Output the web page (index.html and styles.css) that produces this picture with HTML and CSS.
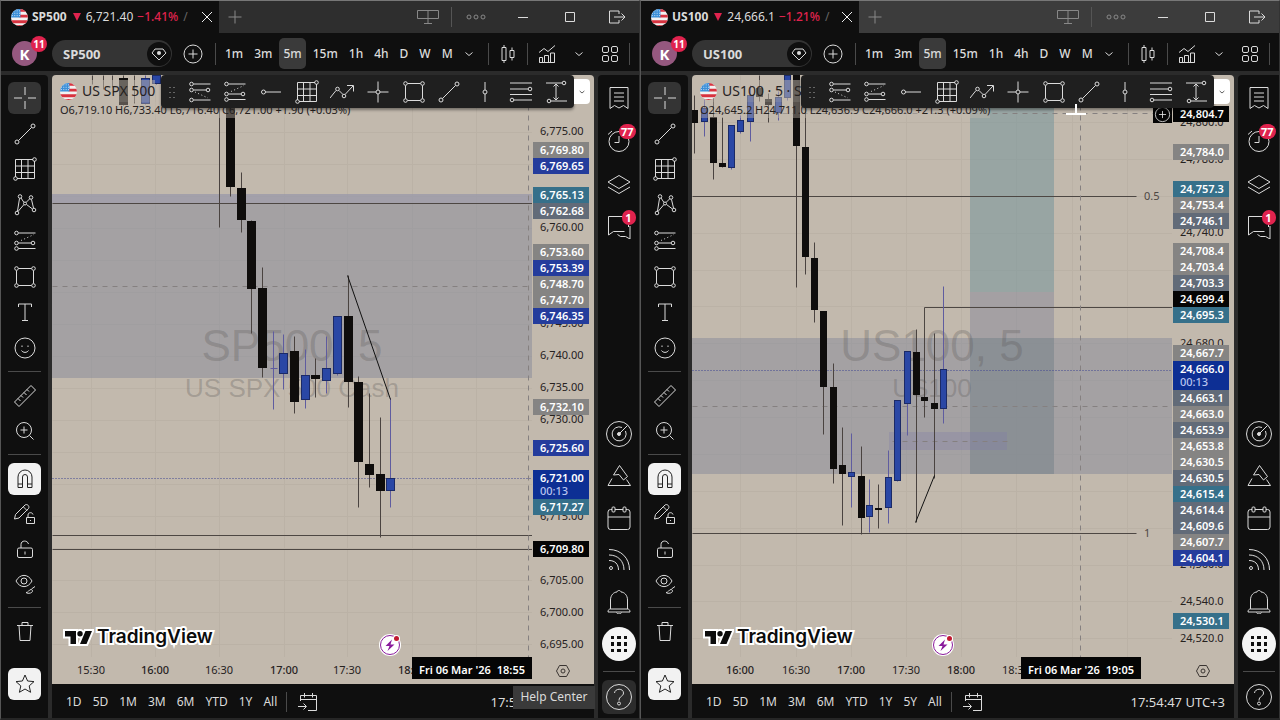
FILE: index.html
```
<!DOCTYPE html>
<html lang="en">
<head>
    <meta charset="UTF-8">
    <meta name="viewport" content="width=device-width, initial-scale=1">
    <title>SP500 / US100</title>
    <link rel="stylesheet" href="styles.css">
</head>
<body>
    <!-- icon sprite, every icon is on a 24x24 box -->
    <svg class="sprite" xmlns="http://www.w3.org/2000/svg">
        <defs>
            <clipPath id="flagClip"><circle cx="9" cy="9" r="9"/></clipPath>
        </defs>
        <symbol id="flag" viewBox="0 0 18 18">
            <g clip-path="url(#flagClip)" stroke="none">
                <path fill="#f2f2f2" d="M0 0h18v18H0z"/>
                <path fill="#d8323f" d="M9 0h9v3H9zM9 6h9v3H9zM0 12h18v3H0zM0 17h18v1H0z"/>
                <path fill="#3b8fd8" d="M0 0h10v9H0z"/>
                <path stroke="#d5e8f8" stroke-width="1" stroke-dasharray="1 1.5" d="M1 2h9M1 4.500h9M1 7h9"/>
            </g>
        </symbol>
        <symbol id="close" viewBox="0 0 24 24"><path d="M7 7l10 10M17 7L7 17"/></symbol>
        <symbol id="plus" viewBox="0 0 24 24"><path d="M12 5.500v13M5.500 12h13"/></symbol>
        <symbol id="screens" viewBox="0 0 24 24"><path d="M1.500 5.500h21v8h-21zM12 5.500v13M8 18.500h8"/></symbol>
        <symbol id="dots" viewBox="0 0 24 24"><circle cx="5" cy="12" r="2"/><circle cx="12" cy="12" r="2"/><circle cx="19" cy="12" r="2"/></symbol>
        <symbol id="minimize" viewBox="0 0 24 24"><path d="M7 12.500h10"/></symbol>
        <symbol id="maximize" viewBox="0 0 24 24"><path d="M7.500 7.500h9v9h-9z"/></symbol>
        <symbol id="exit" viewBox="0 0 24 24"><path d="M14 9V6H4.500v12H14v-3M9 12h11M16.500 8.500L20 12l-3.500 3.500"/></symbol>
        <symbol id="gem" viewBox="0 0 24 24"><circle cx="12" cy="12" r="12" fill="#0f0f0f" stroke="none"/><path d="M8 7h8l3 4-7 7-7-7z"/><circle cx="12" cy="11" r="2" fill="currentColor" stroke="none"/></symbol>
        <symbol id="plusCircle" viewBox="0 0 24 24"><circle cx="12" cy="12" r="9"/><path d="M12 7.500v9M7.500 12h9"/></symbol>
        <symbol id="chevron" viewBox="0 0 24 24"><path d="M8.500 10.500l3.500 3 3.500-3"/></symbol>
        <symbol id="candles" viewBox="0 0 24 24"><path d="M6 5.500h4v13H6zM8 3v2.500M8 18.500V21M14 8.500h4v7h-4zM16 5.500v3M16 15.500v3"/></symbol>
        <symbol id="indicators" viewBox="0 0 24 24"><path d="M4.500 20.500v-5h3v5zM9.500 20.500v-7h4v7zM15.500 20.500V11h4v9.500zM4.500 20.500h15M4 10.500l5-4 4 3 7-6"/></symbol>
        <symbol id="tiles" viewBox="0 0 24 24"><rect x="4.500" y="4.500" width="6" height="6" rx="1.500"/><rect x="13.500" y="4.500" width="6" height="6" rx="1.500"/><rect x="4.500" y="13.500" width="6" height="6" rx="1.500"/><rect x="13.500" y="13.500" width="6" height="6" rx="1.500"/></symbol>

        <symbol id="crosshair" viewBox="0 0 24 24"><path d="M12 1v8M12 15v8M1 12h8M15 12h8"/></symbol>
        <symbol id="trendLine" viewBox="0 0 24 24"><circle cx="4" cy="20" r="2"/><circle cx="20" cy="4" r="2"/><path d="M5.500 18.500l13-13"/></symbol>
        <symbol id="gannBox" viewBox="0 0 24 24"><path d="M20 2.500H2.500V20M4 21.500h17.500V4M8.500 2.500v19M15 2.500v19M2.500 9h19M2.500 15.500h19"/><circle cx="21.500" cy="2.500" r="1.800"/><circle cx="2.500" cy="21.500" r="1.800"/></symbol>
        <symbol id="pattern" viewBox="0 0 24 24"><circle cx="7" cy="3.500" r="1.800"/><circle cx="18" cy="4.500" r="1.800"/><circle cx="4" cy="20" r="1.800"/><circle cx="21" cy="17" r="1.800"/><circle cx="12" cy="10.500" r="1.500"/><path d="M6.500 5.500L4.500 18M5 18.500l6-7M13 9.500l4-4M18.500 6.500l2 8.500M8 5l3 4.500M13.500 11.500l6 4.500"/></symbol>
        <symbol id="fibUp" viewBox="0 0 24 24"><circle cx="3.500" cy="4" r="1.800"/><circle cx="3.500" cy="14" r="1.800"/><circle cx="20" cy="14" r="1.800"/><circle cx="3.500" cy="19.500" r="1.800"/><path d="M5.500 4h17M5.500 14h12.500M5.500 19.500h17"/><path stroke-dasharray="1 2.500" d="M8 11.500l13-6"/></symbol>
        <symbol id="fibDown" viewBox="0 0 24 24"><circle cx="3.500" cy="4" r="1.800"/><circle cx="3.500" cy="10" r="1.800"/><circle cx="20" cy="10" r="1.800"/><circle cx="3.500" cy="20" r="1.800"/><path d="M5.500 4h17M5.500 10h12.500M5.500 20h17"/><path stroke-dasharray="1 2.500" d="M7 12l13 6"/></symbol>
        <symbol id="hRay" viewBox="0 0 24 24"><circle cx="4.500" cy="12" r="2"/><path d="M6.500 12H22"/></symbol>
        <symbol id="wave" viewBox="0 0 24 24"><circle cx="7.500" cy="9" r="1.800"/><circle cx="14" cy="16" r="1.800"/><path d="M0 18l6-7.500M9 10.500l4 4M15 14.500L23 6M17 5.500h6.500v6"/></symbol>
        <symbol id="crossLine" viewBox="0 0 24 24"><circle cx="12" cy="12" r="2"/><path d="M12 1.500V10M12 14v8.500M1.500 12H10M14 12h8.500"/></symbol>
        <symbol id="rectangle" viewBox="0 0 24 24"><circle cx="3.500" cy="3.500" r="1.800"/><circle cx="20.500" cy="3.500" r="1.800"/><circle cx="3.500" cy="20.500" r="1.800"/><circle cx="20.500" cy="20.500" r="1.800"/><path d="M5.500 3.500h13M5.500 20.500h13M3.500 5.500v13M20.500 5.500v13"/></symbol>
        <symbol id="vLine" viewBox="0 0 24 24"><circle cx="12" cy="12" r="2"/><path d="M12 2v8M12 14v8"/></symbol>
        <symbol id="channel" viewBox="0 0 24 24"><circle cx="21" cy="9" r="1.800"/><circle cx="3" cy="20" r="1.800"/><path d="M1 3h22M1 9h18M1 14.500h22M5 20h18"/></symbol>
        <symbol id="priceRange" viewBox="0 0 24 24"><circle cx="20" cy="3" r="1.800"/><circle cx="5" cy="21" r="1.800"/><path d="M2 3h16M7 21h16M12 4v16M9.500 6.500L12 4l2.500 2.500M9.500 17.500L12 20l2.500-2.500"/></symbol>
        <symbol id="text" viewBox="0 0 24 24"><path d="M5.500 7V4h13v3M12 4v16M9 20.500h6"/></symbol>
        <symbol id="smile" viewBox="0 0 24 24"><circle cx="12" cy="12" r="10"/><path d="M8.500 14.500c1.500 2.500 5.500 2.500 7 0M9 9.500v1.500M15 9.500v1.500"/></symbol>
        <symbol id="ruler" viewBox="0 0 24 24"><path d="M1.500 18L18 1.500 22.500 6 6 22.500zM5 14.500l2.500 2.500M8 11.500l2 2M11 8.500l2.500 2.500M14 5.500l2 2"/></symbol>
        <symbol id="zoomIn" viewBox="0 0 24 24"><circle cx="11" cy="11" r="7.500"/><path d="M16.500 16.500l4 4M11 7.500v7M7.500 11h7"/></symbol>
        <symbol id="magnet" viewBox="0 0 24 24"><path d="M5 20.500V10a7 7 0 0 1 14 0v10.500h-4.500V10a2.500 2.500 0 0 0-5 0v10.500zM5 17h4.500M14.500 17H19"/></symbol>
        <symbol id="pencilLock" viewBox="0 0 24 24"><path d="M2.500 12.500L12 3c2-1.500 5 1 3.500 3.500L6 16l-4.500 1zM10.500 5l3.500 3.500M13.500 15.500h8v6h-8zM15 15.500V13c0-3 4.500-3 5-.5M17.500 18v1"/></symbol>
        <symbol id="unlock" viewBox="0 0 24 24"><rect x="4.500" y="11" width="15" height="9.500" rx="1.500"/><path d="M8 11V7.500c0-4.500 6.500-4.500 7.500-.5M12 14.500v3"/></symbol>
        <symbol id="eye" viewBox="0 0 24 24"><path d="M3 9c4-7.500 12-7.500 16 0-4 7.500-12 7.500-16 0z"/><circle cx="11" cy="9" r="3"/><path d="M13 20.500c2 .5 3-3 5-3s2 3-.5 3.500-3 .5-4.500-.5zM18.500 17l3.500-2.500"/></symbol>
        <symbol id="trash" viewBox="0 0 24 24"><path d="M4 5.500h16M6 5.500l1 15h10l1-15M9 5.500v-3h6v3"/></symbol>
        <symbol id="star" viewBox="0 0 24 24"><path d="M12 3l2.600 6 6.400.6-4.800 4.300 1.400 6.400L12 17l-5.600 3.300 1.400-6.400L3 9.600 9.400 9z"/></symbol>

        <symbol id="watchlist" viewBox="0 0 24 24"><path d="M3 1.500h18v21l-4.500-3-4.500 2.500-4.500-2.500-4.500 3zM7 7h10M7 11h10M7 15h10"/></symbol>
        <symbol id="alarm" viewBox="0 0 24 24"><circle cx="12" cy="12.500" r="10"/><path d="M12 7v6.500H7.500M1 5.500L5 2M19 2l4 3.500"/></symbol>
        <symbol id="layers" viewBox="0 0 24 24"><path d="M12 3.500l11 6.500-11 6.500L1 10zM1 15l11 6.500L23 15"/></symbol>
        <symbol id="chat" viewBox="0 0 24 24"><path d="M17.500 16.500H6.500L1.500 20V1.500h20V12M10.500 19.500l3 2h5l4.500 2.500V11"/></symbol>
        <symbol id="radar" viewBox="0 0 26 26"><circle cx="13" cy="13" r="12.500"/><path d="M19.500 10a7 7 0 1 1-3.500-3.500M13 13l8.500-8.500"/><circle cx="13" cy="13" r="1.500" fill="currentColor"/></symbol>
        <symbol id="mountain" viewBox="0 0 24 24"><path d="M6.500 11l6-9.500 8 11-4 3.500-4.500-5.500zM5 14.500L1 21.500h22.500L19.500 15.500"/></symbol>
        <symbol id="calendar" viewBox="0 0 24 24"><rect x="1" y="3.500" width="22" height="20" rx="2.500"/><path d="M1 11h22"/><rect x="5" y="1" width="3" height="5" rx="1" fill="#0f0f0f"/><rect x="16" y="1" width="3" height="5" rx="1" fill="#0f0f0f"/></symbol>
        <symbol id="feed" viewBox="0 0 24 24"><circle cx="4" cy="20" r="1.500"/><path d="M2 1.500C14 1.500 22.500 10 22.500 22M2 7c9 0 15 6 15 15M2 12.500c6 0 9.500 3.500 9.500 9.500"/></symbol>
        <symbol id="bell" viewBox="0 0 24 24"><path d="M3.500 19v-9C3.500 5 7 2 10 2c.5-2 3.500-2 4 0 3 0 6.500 3 6.500 8v9M1 22c0-2 1-3 2.500-3h17c1.500 0 2.500 1 2.500 3zM9.500 22.500c.5 2 4.500 2 5 0"/></symbol>
        <symbol id="apps" viewBox="0 0 24 24"><path fill="currentColor" stroke="none" d="M4 4h3v3H4zM10 4h4v3h-4zM17 4h3v3h-3zM4 10h3v4H4zM10 10h4v4h-4zM17 10h3v4h-3zM4 17h3v3H4zM10 17h4v3h-4zM17 17h3v3h-3z"/></symbol>
        <symbol id="help" viewBox="0 0 26 26"><circle cx="13" cy="13" r="12.500"/><path d="M8.500 9c.5-5 9-5 9 0 0 3.500-4.500 3-4.500 7.500"/><circle cx="13" cy="19.500" r="1.500"/></symbol>
        <symbol id="goTo" viewBox="0 0 24 24"><path d="M4.500 11V5.500h16v15H12M4.500 9.500h16M8.500 3v4.500M16.500 3v4.500M2 16.500h8M7.500 13.500l3 3-3 3"/></symbol>
        <symbol id="hexagon" viewBox="0 0 24 24"><path d="M8.500 6.500h7l3 5.500-3 5.500h-7l-3-5.500z"/><circle cx="12" cy="12" r="2"/></symbol>
        <symbol id="event" viewBox="0 0 24 24"><circle cx="12" cy="12" r="11" fill="#fff" stroke="none"/><circle cx="12" cy="12" r="9.500" fill="#fff" stroke="#8a1a9c"/><path fill="#8a1a9c" stroke="none" d="M14 6.500L7.500 13h4L9.500 18l7-6.500h-4z"/><circle cx="18.500" cy="5.500" r="3.500" fill="#fff" stroke="none"/><circle cx="18.500" cy="5.500" r="2.500" fill="#c01830" stroke="none"/></symbol>
        <symbol id="tvMark" viewBox="0 0 32 20"><path fill="#0c0c0c" stroke="#fff" stroke-width="4" paint-order="stroke" d="M3 4h11v13H8.500V9.500H3zM18 4a2.700 2.700 0 1 1 0 5.400A2.700 2.700 0 0 1 18 4zM23.500 4H30l-5.500 13H18z"/></symbol>
    </svg>

    <main class="desk" id="desk"></main>

    <template id="windowTemplate">
        <section class="window">
            <header class="titlebar">
                <div class="tab">
                    <svg class="flag"><use href="#flag"/></svg>
                    <b data-text="symbol"></b>
                    <i class="arrow-down"></i>
                    <span class="last" data-text="last"></span>
                    <span class="change" data-text="change"></span>
                    <span class="faded">/</span>
                    <button class="tab-close" aria-label="Close tab"><svg class="icon"><use href="#close"/></svg></button>
                </div>
                <button class="new-tab" aria-label="New tab"><svg class="icon"><use href="#plus"/></svg></button>
                <div class="window-buttons">
                    <button class="dim" aria-label="Layouts"><svg class="icon"><use href="#screens"/></svg></button>
                    <span class="v-sep"></span>
                    <button class="dim" aria-label="More"><svg class="icon"><use href="#dots"/></svg></button>
                    <button aria-label="Minimize"><svg class="icon"><use href="#minimize"/></svg></button>
                    <button aria-label="Maximize"><svg class="icon"><use href="#maximize"/></svg></button>
                    <button aria-label="Exit"><svg class="icon"><use href="#exit"/></svg></button>
                </div>
            </header>

            <nav class="topbar">
                <button class="avatar" aria-label="Profile">K<span class="badge">11</span></button>
                <button class="search"><span data-text="symbol"></span><svg class="icon"><use href="#gem"/></svg></button>
                <button class="compare" aria-label="Compare"><svg class="icon"><use href="#plusCircle"/></svg></button>
                <span class="v-sep"></span>
                <div class="intervals">
                    <button>1m</button>
                    <button>3m</button>
                    <button class="active">5m</button>
                    <button>15m</button>
                    <button>1h</button>
                    <button>4h</button>
                    <button>D</button>
                    <button>W</button>
                    <button>M</button>
                </div>
                <div class="chart-buttons">
                    <button aria-label="More intervals"><svg class="icon"><use href="#chevron"/></svg></button>
                    <span class="v-sep"></span>
                    <button aria-label="Candles"><svg class="icon"><use href="#candles"/></svg></button>
                    <span class="v-sep"></span>
                    <button aria-label="Indicators"><svg class="icon"><use href="#indicators"/></svg></button>
                    <button aria-label="Favourites"><svg class="icon"><use href="#chevron"/></svg></button>
                    <button aria-label="Templates"><svg class="icon"><use href="#tiles"/></svg></button>
                    <span class="v-sep"></span>
                </div>
            </nav>

            <div class="workspace">
                <aside class="tools">
                    <div class="tool-group drawing" data-icons="crosshair trendLine gannBox pattern fibUp rectangle text smile"></div>
                    <div class="tool-group" data-icons="ruler zoomIn"></div>
                    <div class="tool-group locks" data-icons="magnet pencilLock unlock eye"></div>
                    <div class="tool-group" data-icons="trash"></div>
                    <div class="favourite" data-icons="star"></div>
                </aside>

                <div class="center">
                    <div class="chart">
                        <svg class="plot"></svg>
                        <svg class="price-axis"></svg>
                        <svg class="time-axis"></svg>
                        <div class="legend">
                            <div class="legend-title"><svg class="flag"><use href="#flag"/></svg><span data-text="title"></span></div>
                            <div class="ohlc" data-text="ohlc"></div>
                        </div>
                        <div class="floating">
                            <div class="floating-tools">
                                <span class="grip"></span>
                                <div class="floating-icons" data-icons="fibDown fibUp hRay gannBox wave crossLine rectangle trendLine vLine channel priceRange"></div>
                            </div>
                            <button class="caret" aria-label="Currency"><svg class="icon"><use href="#chevron"/></svg></button>
                        </div>
                        <svg class="cursor"><path d="M12 2v10M2 12h20"/></svg>
                        <div class="brand">
                            <svg class="brand-mark"><use href="#tvMark"/></svg>
                            <span>TradingView</span>
                        </div>
                    </div>
                    <footer class="ranges">
                        <div class="range-buttons"></div>
                        <span class="v-sep"></span>
                        <button aria-label="Go to date"><svg class="icon"><use href="#goTo"/></svg></button>
                        <span class="clock">17:54:47 UTC+3</span>
                    </footer>
                </div>

                <aside class="widgets">
                    <div class="widget-group">
                        <button aria-label="Watchlist"><svg class="icon"><use href="#watchlist"/></svg></button>
                        <button aria-label="Alerts"><svg class="icon"><use href="#alarm"/></svg><span class="badge">77</span></button>
                        <button aria-label="Object tree"><svg class="icon"><use href="#layers"/></svg></button>
                        <button aria-label="Chats"><svg class="icon"><use href="#chat"/></svg><span class="badge">1</span></button>
                    </div>
                    <div class="widget-group lower">
                        <button aria-label="Screeners"><svg class="icon big"><use href="#radar"/></svg></button>
                        <button aria-label="Pine"><svg class="icon"><use href="#mountain"/></svg></button>
                        <button aria-label="Calendar"><svg class="icon"><use href="#calendar"/></svg></button>
                        <button aria-label="News"><svg class="icon"><use href="#feed"/></svg></button>
                        <button aria-label="Notifications"><svg class="icon"><use href="#bell"/></svg></button>
                        <button class="apps" aria-label="Products"><svg class="icon"><use href="#apps"/></svg></button>
                    </div>
                    <span class="h-sep"></span>
                    <button class="help" aria-label="Help Center"><svg class="icon big"><use href="#help"/></svg><span class="tip">Help Center</span></button>
                </aside>
            </div>
        </section>
    </template>
    <script src="app.js"></script>
</body>
</html>
```
FILE: styles.css
```
* {
    box-sizing: border-box;
}
body {
    margin: 0;
    background: #0f0f0f;
    color: #dbdbdb;
    font: 12px/16px "Noto Sans", "Open Sans", sans-serif;
}
button {
    display: flex;
    align-items: center;
    justify-content: center;
    padding: 0;
    border: 0;
    background: none;
    color: inherit;
    font: inherit;
    cursor: pointer;
}
.sprite {
    position: absolute;
    width: 0;
    height: 0;
}
.icon {
    display: block;
    flex: none;
    width: 24px;
    height: 24px;
    fill: none;
    stroke: currentColor;
}
.icon.big {
    width: 26px;
    height: 26px;
}
.flag {
    flex: none;
    width: 17px;
    height: 17px;
}
.v-sep {
    flex: none;
    width: 1px;
    height: 20px;
    background: #4a4a4a;
}
.h-sep {
    flex: none;
    width: 32px;
    height: 1px;
    background: #4a4a4a;
}
.badge {
    position: absolute;
    display: flex;
    align-items: center;
    justify-content: center;
    min-width: 14px;
    height: 14px;
    padding: 0 2px;
    border-radius: 8px;
    background: #e0234e;
    color: #fff;
    font-size: 10px;
    font-weight: 700;
}

/* windows side by side */
.desk {
    display: flex;
    min-height: 100vh;
}
.window {
    display: flex;
    flex: 1;
    flex-direction: column;
    min-width: 0;
    border: 1px solid #555;
    border-top-color: #777;
    border-right-color: #333;
    border-bottom: 2px solid #262626;
}

/* title bar */
.titlebar {
    display: flex;
    height: 32px;
    background: #2e2e2e;
}
.window.focused .titlebar {
    background: #3c3c3c;
}
.tab {
    display: flex;
    align-items: center;
    width: 218px;
    padding-left: 10px;
    background: #0f0f0f;
}
.tab b {
    margin-left: 4px;
}
.arrow-down {
    margin: 0 5px 0 6px;
    border: 4px solid transparent;
    border-top: 8px solid #e0234e;
    border-bottom: 0;
}
.change {
    margin-left: 4px;
    color: #e0234e;
    font-weight: 500;
}
.faded {
    flex: 1;
    margin-left: 5px;
    color: #666;
}
.tab-close {
    width: 24px;
    color: #eee;
}
.new-tab {
    width: 32px;
    color: #888;
}
.window-buttons {
    display: flex;
    align-items: center;
    margin-left: auto;
    padding-right: 10px;
}
.window-buttons button {
    width: 24px;
    margin-left: 23px;
}
.window-buttons .v-sep {
    margin-left: 11px;
    background: #555;
}
.window-buttons .v-sep + button {
    margin-left: 12px;
}
.window-buttons .dim {
    color: #888;
}

/* symbol and intervals */
.topbar {
    display: flex;
    align-items: center;
    height: 38px;
    padding: 3px 0 0 11px;
}
.topbar .v-sep {
    height: 22px;
}
.avatar {
    position: relative;
    width: 25px;
    height: 25px;
    border-radius: 50%;
    background: #95587f;
    color: #fff;
    font-size: 15px;
    font-weight: 700;
}
.avatar .badge {
    top: -5px;
    right: -10px;
    width: 16px;
    height: 16px;
    border-radius: 50%;
}
.search {
    justify-content: space-between;
    width: 120px;
    height: 27px;
    margin-left: 15px;
    padding: 0 1px 0 11px;
    border-radius: 14px;
    background: #343434;
    font-size: 13px;
    font-weight: 700;
}
.compare {
    width: 24px;
    margin: 0 10px 0 9px;
}
.intervals {
    display: flex;
    gap: 3px;
    margin-left: 5px;
}
.intervals button {
    height: 31px;
    padding: 0 4px;
    border-radius: 5px;
    font-weight: 500;
}
.intervals .active {
    background: #3a3a3a;
}
.chart-buttons {
    display: flex;
    flex: 1;
    align-items: center;
    justify-content: space-between;
    margin-right: 9px;
}

/* body of a window */
.workspace {
    display: flex;
    flex: 1;
    gap: 4px;
    padding-top: 4px;
    background: #2b2b2b;
}
.tools {
    display: flex;
    flex-direction: column;
    width: 47px;
    padding: 7px 7px 18px;
    border-top-right-radius: 4px;
    background: #0f0f0f;
}
.tool-group {
    display: flex;
    flex-direction: column;
    justify-content: space-between;
    gap: 3px;
}
.tool-group + .tool-group {
    margin-top: 7px;
    padding-top: 8px;
    border-top: 1px solid #4a4a4a;
}
.tools button {
    width: 100%;
    height: 32px;
    border-radius: 6px;
}
.drawing {
    height: 282px;
}
.drawing button:first-child {
    background: #343434;
}
.locks button:first-child,
.favourite button {
    background: #f2f2f2;
    color: #222;
}
.favourite {
    margin-top: auto;
}
.widgets {
    display: flex;
    flex-direction: column;
    align-items: center;
    width: 41px;
    padding: 6px 0 4px;
    border-top-left-radius: 4px;
    background: #0f0f0f;
}
.widgets button {
    position: relative;
    flex: none;
    width: 34px;
    height: 34px;
}
.widgets .badge {
    top: 0;
    right: 0;
    height: 15px;
    font-size: 11px;
}
.widget-group {
    display: flex;
    flex-direction: column;
    gap: 9px;
}
.widget-group.lower {
    gap: 8px;
    margin-top: auto;
    margin-bottom: 10px;
}
.widgets .h-sep {
    margin-bottom: 8px;
}
.widgets .apps {
    border-radius: 50%;
    background: #f5f5f5;
    color: #111;
}
.widgets .help {
    border-radius: 6px;
}
.help-open .help {
    background: #2c2c2c;
}
.tip {
    position: absolute;
    right: 41px;
    display: none;
    height: 23px;
    padding: 3px 7px;
    background: #3a3a3a;
    white-space: nowrap;
}
.help-open .tip {
    display: block;
}

/* chart */
.center {
    display: flex;
    flex: 1;
    flex-direction: column;
    min-width: 0;
}
.chart {
    position: relative;
    display: grid;
    flex: 1;
    grid-template-columns: 1fr 62px;
    grid-template-rows: 1fr 27px;
    overflow: hidden;
    border-radius: 4px 4px 0 0;
    background: #c2b9ad;
    color: #26221f;
}
.plot,
.price-axis,
.time-axis {
    width: 100%;
    height: 100%;
    font-size: 11px;
}
.time-axis {
    grid-column: 1 / 3;
}
.grid-line {
    stroke: #bbb2a6;
}
.zone {
    fill: #85899a;
    fill-opacity: .5;
}
.zone-light {
    fill: #a39fb5;
    fill-opacity: .4;
}
.zone-violet {
    fill: #7d7ba8;
    fill-opacity: .3;
}
.target {
    fill: #77959a;
    fill-opacity: .55;
}
.stop {
    fill: #85879a;
    fill-opacity: .5;
}
.stop-deep {
    fill: #7c868c;
    fill-opacity: .6;
}
.watermark {
    fill: #5a5757;
    fill-opacity: .3;
    font-family: "Liberation Sans", Arial, sans-serif;
    text-anchor: middle;
}
.watermark.name {
    font-size: 44px;
}
.watermark.about {
    font-size: 26px;
}
.level {
    stroke: #4d4743;
}
.dashed {
    stroke: #858080;
    stroke-dasharray: 5 5;
}
.last-price {
    stroke: #3e4590;
    stroke-dasharray: 1 2;
}
.trend {
    stroke: #111;
}
.up {
    fill: #2a47a5;
    stroke: #1b2a66;
}
.down {
    fill: #0f0d0c;
    stroke: #0f0d0c;
}
.up-wick {
    stroke: #5f5ca0;
}
.down-wick {
    stroke: #4a4340;
}
.fib-label {
    fill: #4d4743;
}
.axis-label {
    fill: #26221f;
}
.axis-label.major {
    font-weight: 500;
}
.tag-text {
    fill: #fff;
    font-weight: 600;
}
.tag-timer {
    fill: #b9c4ee;
    font-weight: 500;
}
.gray { fill: #858483; }
.slate { fill: #626b78; }
.teal { fill: #36708a; }
.blue { fill: #243c9c; }
.navy { fill: #0d2f94; }
.black { fill: #050505; }
.axis-icon {
    fill: none;
    stroke: #3a3532;
}
.legend {
    position: absolute;
    top: 5px;
    left: 8px;
    white-space: nowrap;
}
.legend-title {
    display: flex;
    align-items: center;
    gap: 5px;
    width: max-content;
    height: 22px;
    background: rgba(194, 185, 173, .5);
    font-size: 14px;
}
.ohlc {
    width: max-content;
    background: rgba(194, 185, 173, .4);
    font-size: 11px;
}
.floating {
    position: absolute;
    top: 0;
    right: 4px;
    left: 109px;
    display: flex;
}
.floating-tools {
    display: flex;
    flex: 1;
    align-items: center;
    height: 33px;
    border-radius: 4px;
    background: #1f1f1f;
    box-shadow: 0 2px 3px rgba(0, 0, 0, .4);
    color: #dbdbdb;
}
.grip {
    width: 8px;
    height: 14px;
    margin: 0 6px 0 7px;
    background: radial-gradient(circle, #666 1px, transparent 1px) 0 0 / 4px 5px;
}
.floating-icons {
    display: flex;
    flex: 1;
}
.floating-icons button {
    flex: 1;
}
.caret {
    width: 16px;
    height: 25px;
    margin-top: 4px;
    border-radius: 0 4px 4px 0;
    background: #fff;
    color: #111;
}
.caret .icon {
    width: 16px;
    height: 16px;
}
/* mouse pointer, only in the focused window */
.cursor {
    position: absolute;
    top: 27px;
    left: 372px;
    display: none;
    width: 24px;
    height: 16px;
    stroke: #fff;
    stroke-width: 2;
}
.focused .cursor {
    display: block;
}
.brand {
    position: absolute;
    bottom: 36px;
    left: 10px;
    display: flex;
    align-items: center;
    gap: 3px;
    color: #0c0c0c;
    font: 600 19px/22px Inter, Roboto, sans-serif;
    -webkit-text-stroke: 4px #fff;
    paint-order: stroke fill;
}
.brand-mark {
    width: 32px;
    height: 20px;
}

/* range bar */
.ranges {
    display: flex;
    align-items: center;
    height: 34px;
    padding: 2px 9px 0 14px;
    background: #0f0f0f;
}
.range-buttons {
    display: flex;
    gap: 11px;
}
.ranges .v-sep {
    margin: 0 9px;
}
.clock {
    margin-left: auto;
    font-size: 13px;
}
```
FILE: app.js
```
const FONT_SHIFT = 4;

// candle: [x, high, body top, body bottom, low, up?]
const charts = [
    {
        symbol: 'SP500', last: '6,721.40', change: '−1.41%', title: 'US SPX 500', about: 'US SPX 500 Cash',
        ohlc: 'O6,719.10 H6,733.40 L6,716.40 C6,721.00 +1.90 (+0.03%)',
        helpOpen: true, candleWidth: 7,
        ranges: ['1D', '5D', '1M', '3M', '6M', 'YTD', '1Y', 'All'],
        gridX: [39, 103, 167, 232, 295, 360, 424],
        gridY: [57, 89, 121, 153, 185, 217, 249, 281, 313, 345, 377, 409, 441, 473, 505, 537, 569],
        areas: [['zone', 0, 119, '100%', 184], ['zone-light', 0, 119, '100%', 9]],
        lines: [
            ['level', 0, 128, '100%', 128], ['level', 0, 460, '100%', 460], ['level', 0, 474, '100%', 474],
            ['dashed', 0, 211, '100%', 211], ['dashed', 476, 0, 476, '100%'], ['last-price', 0, 403, '100%', 403]
        ],
        trend: [295, 200, 338, 324],
        labels: [],
        candles: [
            [40, 0, 0, 0, 9, 0], [51, 0, 0, 0, 14, 0], [60, 0, 0, 0, 12, 0], [71, 0, 3, 30, 30, 0], [82, 0, 0, 0, 28, 0],
            [93, 0, 3, 29, 29, 1], [104, 0, 0, 9, 9, 1], [167, 0, 0, 20, 152, 0],
            [178, 0, 0, 112, 121, 0], [189, 97, 113, 145, 157, 0], [199, 145, 146, 214, 258, 0], [210, 192, 213, 293, 302, 0],
            [221, 256, 293, 294, 334, 1], [231, 259, 278, 299, 314, 1], [242, 261, 276, 327, 338, 0], [253, 274, 300, 325, 333, 1],
            [263, 283, 300, 304, 322, 0], [274, 261, 293, 306, 318, 1], [285, 241, 241, 299, 300, 1], [296, 200, 241, 307, 332, 0],
            [306, 301, 307, 387, 432, 0], [317, 318, 389, 400, 412, 0], [328, 342, 399, 416, 462, 0], [338, 323, 403, 416, 432, 1]
        ],
        prices: [
            ['6,775.00', 56], ['6,760.00', 152], ['6,745.00', 248], ['6,740.00', 280], ['6,735.00', 312], ['6,730.00', 344],
            ['6,715.00', 441], ['6,705.00', 505], ['6,700.00', 537], ['6,695.00', 569]
        ],
        tags: [
            ['6,769.80', 75, 'gray'], ['6,769.65', 91, 'blue'], ['6,765.13', 120, 'teal'], ['6,762.68', 136, 'slate'],
            ['6,753.60', 177, 'gray'], ['6,753.39', 193, 'blue'], ['6,748.70', 209, 'gray'], ['6,747.70', 225, 'gray'],
            ['6,746.35', 241, 'blue'], ['6,732.10', 332, 'gray'], ['6,725.60', 373, 'blue'], ['6,721.00', 403, 'navy', '00:13'],
            ['6,717.27', 432, 'teal'], ['6,709.80', 474, 'black']
        ],
        times: [['15:30', 39], ['16:00', 103, 1], ['16:30', 167], ['17:00', 232, 1], ['17:30', 295], ['18:00', 360, 1]],
        pointer: ["Fri 06 Mar '26", '18:55', 360],
        eventX: 338
    },
    {
        symbol: 'US100', last: '24,666.1', change: '−1.21%', title: 'US100 · 5 · S', about: 'US100',
        ohlc: 'O24,645.2 H24,711.0 L24,636.9 C24,666.0 +21.3 (+0.09%)',
        focused: true, candleWidth: 5,
        ranges: ['1D', '5D', '1M', '3M', '6M', 'YTD', '1Y', '5Y', 'All'],
        gridX: [48, 104, 159, 214, 269, 324, 380, 435],
        gridY: [47, 84, 121, 158, 195, 231, 268, 305, 342, 379, 416, 453, 490, 526, 563],
        areas: [
            ['target', 278, 0, 84, 217], ['stop', 278, 217, 84, 46], ['zone', 0, 263, '100%', 136],
            ['stop-deep', 278, 263, 84, 136], ['zone-violet', 197, 357, 118, 18]
        ],
        lines: [
            ['level', 0, 121, 444, 121], ['level', 0, 458, 444, 458], ['level', 232, 232, '100%', 232], ['level', 232, 232, 232, 320],
            ['dashed', 0, 331, '100%', 331], ['dashed', 200, 366, 315, 366], ['dashed', 0, 38, '100%', 38],
            ['dashed', 388, 0, 388, '100%'], ['last-price', 0, 295, '100%', 295]
        ],
        trend: [223, 447, 242, 400],
        labels: [['0.5', 452, 121], ['1', 452, 458]],
        plusButton: true,
        candles: [
            [2, 20, 35, 48, 78, 0], [12, 24, 33, 47, 61, 1], [21, 20, 42, 88, 104, 0], [30, 42, 88, 92, 92, 0],
            [39, 50, 50, 93, 94, 1], [48, 40, 45, 57, 58, 1], [58, 10, 20, 47, 66, 1], [67, 0, 13, 22, 26, 0],
            [76, 18, 24, 30, 47, 0], [86, 16, 22, 38, 45, 1], [95, 0, 0, 23, 25, 1], [104, 0, 0, 71, 212, 0],
            [113, 30, 72, 182, 199, 0], [122, 167, 183, 235, 247, 0], [131, 236, 236, 312, 359, 0], [141, 288, 312, 394, 408, 0],
            [150, 352, 390, 399, 450, 0], [159, 358, 397, 402, 432, 1], [169, 371, 401, 443, 459, 0], [177, 404, 430, 442, 457, 1],
            [186, 409, 433, 435, 453, 0], [196, 375, 402, 433, 448, 1], [205, 325, 325, 406, 406, 1], [215, 276, 276, 329, 360, 1],
            [224, 254, 277, 320, 447, 0], [232, 258, 322, 326, 342, 0], [242, 258, 328, 334, 403, 0], [251, 211, 294, 334, 348, 1]
        ],
        prices: [
            ['24,800.0', 47], ['24,780.0', 84], ['24,740.0', 157], ['24,680.0', 268], ['24,560.0', 489], ['24,540.0', 526], ['24,520.0', 563]
        ],
        tags: [
            ['24,804.7', 39, 'black'], ['24,784.0', 77, 'gray'], ['24,757.3', 114, 'teal'], ['24,753.4', 130, 'gray'],
            ['24,746.1', 146, 'slate'], ['24,708.4', 176, 'gray'], ['24,703.4', 192, 'gray'], ['24,703.3', 208, 'slate'],
            ['24,699.4', 224, 'black'], ['24,695.3', 240, 'teal'], ['24,667.7', 278, 'gray'], ['24,666.0', 294, 'navy', '00:13'],
            ['24,663.1', 323, 'slate'], ['24,663.0', 339, 'gray'], ['24,653.9', 355, 'slate'], ['24,653.8', 371, 'gray'],
            ['24,630.5', 387, 'gray'], ['24,630.5', 403, 'slate'], ['24,615.4', 419, 'teal'], ['24,614.4', 435, 'slate'],
            ['24,609.6', 451, 'slate'], ['24,607.7', 467, 'gray'], ['24,604.1', 483, 'blue'], ['24,530.1', 546, 'teal']
        ],
        times: [['16:00', 48, 1], ['16:30', 104], ['17:00', 159, 1], ['17:30', 214], ['18:00', 269, 1], ['18:30', 324]],
        pointer: ["Fri 06 Mar '26", '19:05', 329],
        eventX: 251
    }
];

// move a pixel position to the middle of its pixel so 1px lines stay sharp
const mid = v => typeof v === 'number' ? v + 0.5 : v;

const line = (cls, x1, y1, x2, y2) =>
    `<line class="${cls}" x1="${mid(x1)}" y1="${mid(y1)}" x2="${mid(x2)}" y2="${mid(y2)}"/>`;
const rect = (cls, x, y, w, h) =>
    `<rect class="${cls}" x="${x}" y="${y}" width="${w}" height="${h}"/>`;
const text = (cls, x, y, value, anchor = 'start') =>
    `<text class="${cls}" x="${x}" y="${y + FONT_SHIFT}" text-anchor="${anchor}">${value}</text>`;

function candle([x, high, top, bottom, low, up], width) {
    const kind = up ? 'up' : 'down';
    const left = x - (width - 1) / 2;
    let out = line(kind + '-wick', x, high, x, low);
    if (bottom - top === 1) {
        out += line(kind + '-wick', left, top, left + width, top);
    } else if (bottom > top) {
        out += rect(kind, left - 0.5, top + 0.5, width + 1, bottom - top - 1);
    }
    return out;
}

function drawPlot(c) {
    let out = '';
    c.gridX.forEach(x => out += line('grid-line', x, 0, x, '100%'));
    c.gridY.forEach(y => out += line('grid-line', 0, y, '100%', y));
    c.areas.forEach(a => out += rect(...a));
    out += `<text class="watermark name" x="50%" y="286">${c.symbol}, 5</text>`;
    out += `<text class="watermark about" x="50%" y="322">${c.about}</text>`;
    c.lines.forEach(l => out += line(...l));
    c.candles.forEach(k => out += candle(k, c.candleWidth));
    out += line('trend', ...c.trend);
    c.labels.forEach(([value, x, y]) => out += text('fib-label', x, y, value));
    out += `<use href="#event" x="${c.eventX - 12}" y="558" width="24" height="24"/>`;
    if (c.plusButton) {
        out += `<svg x="100%" overflow="visible">${rect('black', -19, 31, 19, 17)}
            <use href="#plusCircle" x="-19" y="30" width="19" height="19" fill="none" stroke="#eee"/></svg>`;
    }
    return out;
}

function drawPrices(c) {
    let out = '';
    c.prices.forEach(([value, y]) => out += text('axis-label', 8, y, value));
    c.tags.forEach(([value, y, color, timer]) => {
        out += rect(color, 1, y - 8, 56, timer ? 30 : 16) + text('tag-text', 8, y, value);
        if (timer) out += text('tag-timer', 8, y + 13, timer);
    });
    return out;
}

function drawTimes(c) {
    let out = '';
    c.times.forEach(([value, x, major]) => out += text(major ? 'axis-label major' : 'axis-label', x, 13, value, 'middle'));
    const [day, time, x] = c.pointer;
    out += rect('black', x, 0, 120, 22) + text('tag-text', x + 7, 13, day) + text('tag-text', x + 113, 13, time, 'end');
    out += `<svg x="100%" overflow="visible"><use class="axis-icon" href="#hexagon" x="-43" y="2" width="24" height="24"/></svg>`;
    return out;
}

const template = document.getElementById('windowTemplate');
const desk = document.getElementById('desk');

charts.forEach(c => {
    const win = template.content.cloneNode(true);
    const root = win.querySelector('.window');
    root.classList.toggle('focused', !!c.focused);
    root.classList.toggle('help-open', !!c.helpOpen);
    win.querySelectorAll('[data-text]').forEach(el => el.textContent = c[el.dataset.text]);
    win.querySelectorAll('[data-icons]').forEach(el => {
        el.innerHTML = el.dataset.icons.split(' ').map(name =>
            `<button aria-label="${name}"><svg class="icon"><use href="#${name}"/></svg></button>`).join('');
    });
    win.querySelector('.range-buttons').innerHTML = c.ranges.map(r => `<button>${r}</button>`).join('');
    win.querySelector('.plot').innerHTML = drawPlot(c);
    win.querySelector('.price-axis').innerHTML = drawPrices(c);
    win.querySelector('.time-axis').innerHTML = drawTimes(c);
    desk.appendChild(win);
});
```
